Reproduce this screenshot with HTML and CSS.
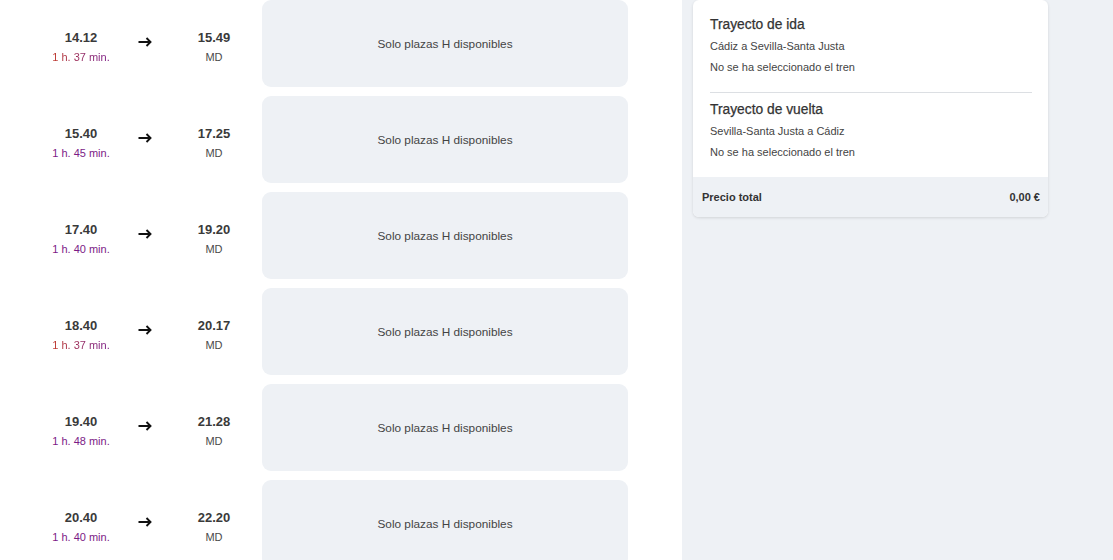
FILE: index.html
```html
<!DOCTYPE html>
<html lang="es">
<head>
<meta charset="utf-8">
<title>Trenes</title>
<link rel="stylesheet" href="styles.css">
</head>
<body>
<div class="page">
  <main class="list">
    <div class="row">
      <div class="side"><div class="time">14.12</div><div class="dur dur-red">1 h. 37 min.</div></div>
      <div class="arrow"><svg width="14" height="10" viewBox="0 0 14 10"><path d="M0.5 5H12.5M8.5 1L12.5 5L8.5 9" fill="none" stroke="#111" stroke-width="1.9"/></svg></div>
      <div class="side side-arr"><div class="time">15.49</div><div class="type">MD</div></div>
      <div class="box">Solo plazas H disponibles</div>
    </div>
    <div class="row">
      <div class="side"><div class="time">15.40</div><div class="dur">1 h. 45 min.</div></div>
      <div class="arrow"><svg width="14" height="10" viewBox="0 0 14 10"><path d="M0.5 5H12.5M8.5 1L12.5 5L8.5 9" fill="none" stroke="#111" stroke-width="1.9"/></svg></div>
      <div class="side side-arr"><div class="time">17.25</div><div class="type">MD</div></div>
      <div class="box">Solo plazas H disponibles</div>
    </div>
    <div class="row">
      <div class="side"><div class="time">17.40</div><div class="dur">1 h. 40 min.</div></div>
      <div class="arrow"><svg width="14" height="10" viewBox="0 0 14 10"><path d="M0.5 5H12.5M8.5 1L12.5 5L8.5 9" fill="none" stroke="#111" stroke-width="1.9"/></svg></div>
      <div class="side side-arr"><div class="time">19.20</div><div class="type">MD</div></div>
      <div class="box">Solo plazas H disponibles</div>
    </div>
    <div class="row">
      <div class="side"><div class="time">18.40</div><div class="dur dur-red">1 h. 37 min.</div></div>
      <div class="arrow"><svg width="14" height="10" viewBox="0 0 14 10"><path d="M0.5 5H12.5M8.5 1L12.5 5L8.5 9" fill="none" stroke="#111" stroke-width="1.9"/></svg></div>
      <div class="side side-arr"><div class="time">20.17</div><div class="type">MD</div></div>
      <div class="box">Solo plazas H disponibles</div>
    </div>
    <div class="row">
      <div class="side"><div class="time">19.40</div><div class="dur">1 h. 48 min.</div></div>
      <div class="arrow"><svg width="14" height="10" viewBox="0 0 14 10"><path d="M0.5 5H12.5M8.5 1L12.5 5L8.5 9" fill="none" stroke="#111" stroke-width="1.9"/></svg></div>
      <div class="side side-arr"><div class="time">21.28</div><div class="type">MD</div></div>
      <div class="box">Solo plazas H disponibles</div>
    </div>
    <div class="row">
      <div class="side"><div class="time">20.40</div><div class="dur">1 h. 40 min.</div></div>
      <div class="arrow"><svg width="14" height="10" viewBox="0 0 14 10"><path d="M0.5 5H12.5M8.5 1L12.5 5L8.5 9" fill="none" stroke="#111" stroke-width="1.9"/></svg></div>
      <div class="side side-arr"><div class="time">22.20</div><div class="type">MD</div></div>
      <div class="box">Solo plazas H disponibles</div>
    </div>
  </main>
  <aside class="panel">
    <div class="card">
      <div class="leg">
        <h3 class="leg-title">Trayecto de ida</h3>
        <p class="leg-line">Cádiz a Sevilla-Santa Justa</p>
        <p class="leg-line">No se ha seleccionado el tren</p>
      </div>
      <div class="leg leg-second">
        <h3 class="leg-title">Trayecto de vuelta</h3>
        <p class="leg-line">Sevilla-Santa Justa a Cádiz</p>
        <p class="leg-line">No se ha seleccionado el tren</p>
      </div>
      <div class="total">
        <span>Precio total</span>
        <span>0,00 €</span>
      </div>
    </div>
  </aside>
</div>
</body>
</html>
```

FILE: styles.css
```css
html, body {
  margin: 0;
  padding: 0;
  background: #ffffff;
  font-family: "Liberation Sans", Arial, sans-serif;
  color: #333;
}
.page {
  display: flex;
  width: 1113px;
  height: 560px;
  overflow: hidden;
}
.list {
  width: 682px;
  flex: none;
  background: #fff;
}
.row {
  display: grid;
  grid-template-columns: 100px 28px 93px 376px;
  height: 87px;
  margin-bottom: 9px;
  padding-left: 31px;
}
.side {
  display: flex;
  flex-direction: column;
  align-items: center;
  padding-top: 30px;
}
.side-arr {
  padding-left: 17px;
}
.time {
  font-size: 13px;
  font-weight: bold;
  line-height: 16px;
  color: #3a3a3a;
}
.dur {
  margin-top: 4px;
  font-size: 11px;
  line-height: 14px;
  color: #7c1a86;
}
.dur-red {
  background: linear-gradient(90deg, #c0392b 0%, #8e2a6e 60%, #7c1a86 100%);
  -webkit-background-clip: text;
  background-clip: text;
  color: transparent;
}
.type {
  margin-top: 4px;
  font-size: 11px;
  line-height: 14px;
  color: #4a4a4a;
}
.arrow {
  display: flex;
  justify-content: center;
  padding-top: 37px;
}
.arrow svg { display: block; }
.box {
  margin-left: 10px;
  width: 366px;
  height: 87px;
  background: #eef1f5;
  border-radius: 9px;
  display: flex;
  align-items: center;
  justify-content: center;
  font-size: 11.8px;
  color: #444;
}
.panel {
  flex: 1;
  background: #eef1f5;
  padding-left: 11px;
}
.card {
  width: 355px;
  background: #fff;
  border-radius: 6px;
  box-shadow: 0 1px 3px rgba(0,0,0,0.12);
  overflow: hidden;
}
.leg {
  margin: 0 16px 0 17px;
  padding-top: 16px;
  padding-bottom: 16px;
}
.leg-second {
  border-top: 1px solid #dcdfe3;
  padding-top: 8px;
  padding-bottom: 16px;
}
.leg-title {
  margin: 0;
  font-size: 13.8px;
  font-weight: normal;
  -webkit-text-stroke: 0.25px #333;
  line-height: 18px;
  color: #333;
}
.leg-line {
  margin: 3px 0 0;
  font-size: 11px;
  line-height: 18px;
  color: #444;
}
.total {
  display: flex;
  justify-content: space-between;
  align-items: center;
  height: 40px;
  padding: 0 8px 0 9px;
  background: #eef1f5;
  font-size: 11px;
  font-weight: bold;
  color: #333;
}
```
